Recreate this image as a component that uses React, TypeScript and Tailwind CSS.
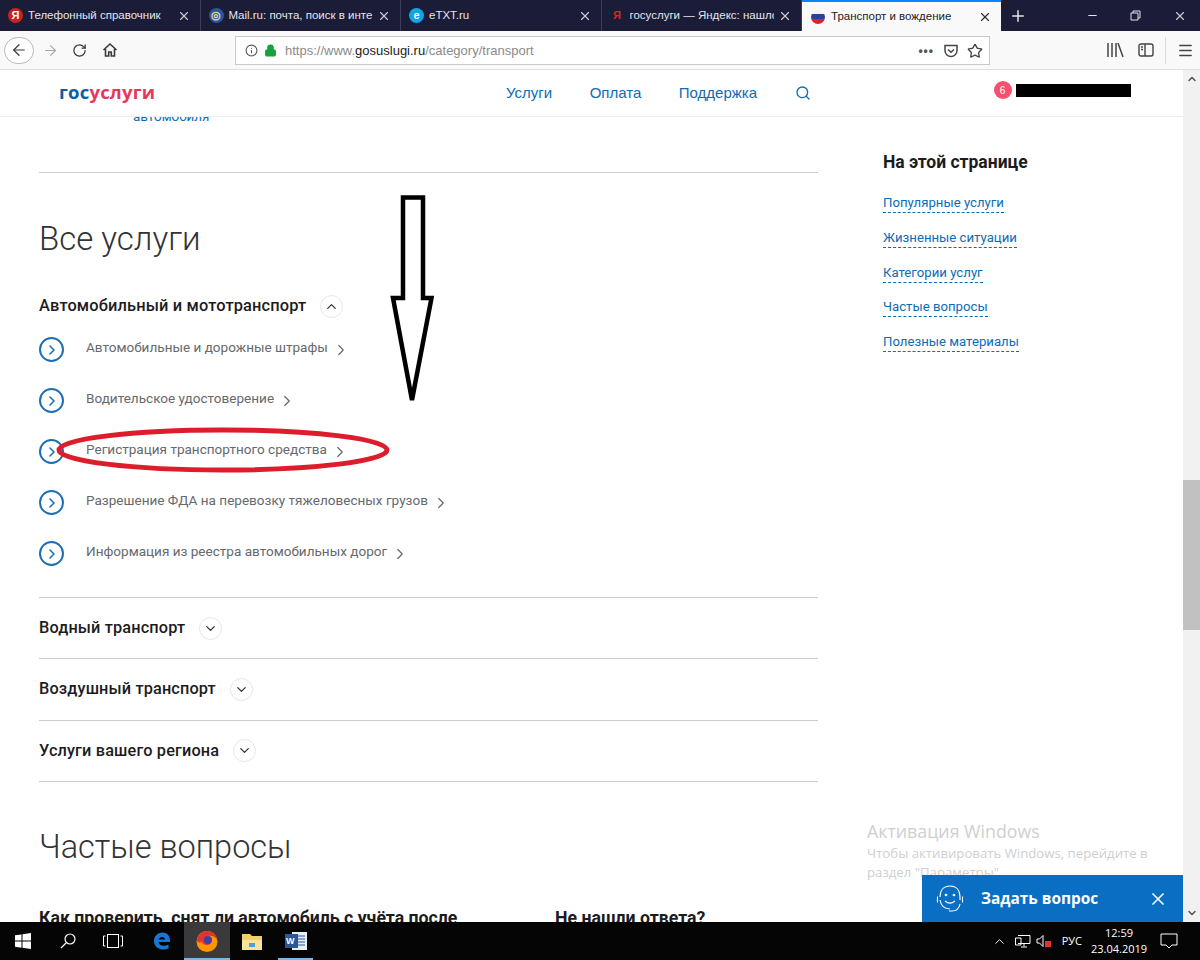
import React from 'react';
import {
  ArrowLeft,
  ArrowRight,
  ChevronDown,
  ChevronRight,
  ChevronUp,
  Info,
  Lock,
  Menu,
  Minus,
  Plus,
  RotateCw,
  Search,
  Star,
  X,
} from 'lucide-react';

const TABS = [
  { title: 'Телефонный справочник', color: 'bg-[#c8231e] text-white', glyph: 'Я' },
  { title: 'Mail.ru: почта, поиск в инте', color: 'bg-[#2a55a5] text-[#e8d9a0]', glyph: '◎' },
  { title: 'eTXT.ru', color: 'bg-[#13a4e8] text-white', glyph: 'e' },
  { title: 'госуслуги — Яндекс: нашло', color: 'bg-transparent text-[#e0231c]', glyph: 'Я' },
];

const SERVICES = [
  'Автомобильные и дорожные штрафы',
  'Водительское удостоверение',
  'Регистрация транспортного средства',
  'Разрешение ФДА на перевозку тяжеловесных грузов',
  'Информация из реестра автомобильных дорог',
];

const OTHER = ['Водный транспорт', 'Воздушный транспорт', 'Услуги вашего региона'];

const ANCHORS = ['Популярные услуги', 'Жизненные ситуации', 'Категории услуг', 'Частые вопросы', 'Полезные материалы'];

const TabBar = () => (
  <div className="flex h-[31px] bg-[#1a1c38] text-[11.5px] text-[#e4e4ea]">
    {TABS.map((tab) => (
      <div key={tab.title} className="flex w-[200.5px] items-center border-r border-[#3a3d5c] pl-2 pr-[9px]">
        <span className={`mr-[5px] flex h-[15px] w-[15px] shrink-0 items-center justify-center rounded-full text-[11px] font-bold leading-none ${tab.color}`}>
          {tab.glyph}
        </span>
        <span className="flex-1 overflow-hidden whitespace-nowrap">{tab.title}</span>
        <X size={14} className="ml-1 shrink-0 text-[#c9cad4]" />
      </div>
    ))}
    <div className="flex w-[199px] items-center border-t-2 border-[#0a84ff] bg-[#f9f9fa] pl-2 pr-[9px] text-[#222]">
      <svg width="16" height="16" viewBox="0 0 16 16" className="mr-[5px] shrink-0">
        <clipPath id="flag">
          <circle cx="8" cy="8" r="7" />
        </clipPath>
        <g clipPath="url(#flag)">
          <rect width="16" height="6" y="0" fill="#f2f2f2" />
          <rect width="16" height="5" y="5" fill="#2a3f9e" />
          <rect width="16" height="6" y="10" fill="#d8242c" />
        </g>
      </svg>
      <span className="flex-1 whitespace-nowrap">Транспорт и вождение</span>
      <X size={14} className="text-[#333]" />
    </div>
    <div className="flex flex-1 items-center text-[#e4e4ea]">
      <Plus size={18} className="ml-[8px]" />
      <Minus size={13} className="ml-[59px]" />
      <svg width="11" height="11" viewBox="0 0 11 11" fill="none" stroke="currentColor" className="ml-[31px]">
        <path d="M1 3h7v7H1zM3 3V1h7v7H8" />
      </svg>
      <X size={14} className="ml-[32px] text-[#c9cad4]" />
    </div>
  </div>
);

const Toolbar = () => (
  <div className="flex h-[39px] items-center border-b border-[#e0e0e2] bg-[#f9f9fa] text-[#3a3a3c]">
    <div className="ml-[4px] flex h-[27px] w-[30px] items-center justify-center rounded-full border border-[#b8b8ba] bg-white">
      <ArrowLeft size={18} strokeWidth={1.6} />
    </div>
    <ArrowRight size={17} strokeWidth={1.6} className="ml-[8px] text-[#a8a8aa]" />
    <RotateCw size={15} strokeWidth={2} className="ml-[13px]" />
    <svg width="16" height="16" viewBox="0 0 16 16" fill="none" stroke="currentColor" strokeWidth="1.6" className="ml-[15px]">
      <path d="M1.5 8 8 2l6.5 6M3.5 7v7h3.2v-4h2.6v4h3.2V7" />
    </svg>
    <div className="ml-[117px] mt-[1px] flex h-[29px] w-[755px] items-center border border-[#c9c9cb] bg-white pl-[9px] pr-[6px] text-[13px]">
      <Info size={13} className="text-[#555]" />
      <Lock size={13} fill="#12a33a" className="ml-[6px] text-[#12a33a]" />
      <span className="ml-[8px] flex-1 text-[#8a8a8c]">
        https://www.<span className="text-[#222]">gosuslugi.ru</span>/category/transport
      </span>
      <span className="mr-[9px] text-[12px] font-bold tracking-[1px] text-[#555]">•••</span>
      <svg width="16" height="16" viewBox="0 0 16 16" fill="none" stroke="#444" strokeWidth="1.5">
        <path d="M2 2.5h12v5a6 6 0 0 1-12 0zM5 6.5l3 2.8 3-2.8" />
      </svg>
      <Star size={16} className="ml-[8px] text-[#444]" />
    </div>
    <svg width="18" height="16" viewBox="0 0 18 16" fill="none" stroke="#444" strokeWidth="1.5" className="ml-[116px]">
      <path d="M2 1v14M6 1v14M10 1v14M12 1l5 14" />
    </svg>
    <svg width="16" height="14" viewBox="0 0 16 14" fill="none" stroke="#444" strokeWidth="1.4" className="ml-[14px]">
      <rect x="1" y="1" width="14" height="12" rx="2" />
      <path d="M7 1v12M3 4h2M3 6.5h2" />
    </svg>
    <div className="ml-[11px] h-[27px] border-l border-[#dcdcde]" />
    <Menu size={17} className="ml-[11px] text-[#444]" />
  </div>
);

const SiteHeader = () => (
  <div className="flex h-[47px] items-center border-b border-[#eceff2] bg-white">
    <div className="ml-[59px] -mt-[2px] w-[447px] font-['Open_Sans',sans-serif] text-[18.5px] font-bold leading-none tracking-[0.2px]">
      <span className="text-[#0d5c9e]">гос</span>
      <span className="text-[#e8375a]">услуги</span>
    </div>
    <nav className="flex items-center gap-[37.500px] font-['Liberation_Sans',sans-serif] text-[15px] text-[#0d6cb5]">
      <span>Услуги</span>
      <span>Оплата</span>
      <span>Поддержка</span>
      <Search size={16} strokeWidth={2} />
    </nav>
    <span className="ml-[183px] -mt-[6px] flex h-[18px] w-[18px] items-center justify-center rounded-full bg-[#f5516f] text-[10px] text-white">
      6
    </span>
    <div className="ml-[4px] -mt-[6px] h-[13px] w-[115px] bg-black" />
  </div>
);

const ServiceRow = ({ label }: { label: string }) => (
  <div className="flex h-[51px] items-center">
    <span className="flex h-[25px] w-[25px] items-center justify-center rounded-full border-2 border-[#1d6fb5] text-[#1d6fb5]">
      <ChevronRight size={16} strokeWidth={2.4} />
    </span>
    <span className="ml-[22px] mb-[4px] text-[13.550px] text-[#66696d]">{label}</span>
    <ChevronRight size={18} strokeWidth={1.6} className="ml-[4px] text-[#66696d]" />
  </div>
);

const RoundToggle = ({ open }: { open?: boolean }) => (
  <span className="ml-[14px] flex h-[23px] w-[23px] items-center justify-center rounded-full border border-[#e4e6e8] text-[#333]">
    {open ? <ChevronUp size={15} /> : <ChevronDown size={15} />}
  </span>
);

const MainColumn = () => (
  <div className="w-[779px]">
    <div className="ml-[94px] -mt-[9px] h-[18px] text-[13.400px] leading-[18px] text-[#0d6cb5]">автомобиля</div>
    <div className="mt-[46px] border-t border-[#c9cdd1]" />
    <h2 className="mt-[42px] text-[33px] font-light leading-[48px] text-[#333]">Все услуги</h2>
    <div className="mt-[29px] flex h-[28px] items-center">
      <span className="text-[16.4px] font-medium tracking-[0.15px] text-[#1c1c1e]">Автомобильный и мототранспорт</span>
      <RoundToggle open />
    </div>
    <div className="mt-[4px] pb-[18px]">
      {SERVICES.map((label) => (
        <ServiceRow key={label} label={label} />
      ))}
    </div>
    {OTHER.map((label) => (
      <div key={label} className="flex h-[61.300px] items-center border-t border-[#c9cdd1]">
        <span className="text-[16.3px] font-medium tracking-[0.15px] text-[#1c1c1e]">{label}</span>
        <RoundToggle />
      </div>
    ))}
    <div className="border-t border-[#c9cdd1]" />
    <h2 className="mt-[41px] text-[32.500px] font-light leading-[48px] text-[#333]">Частые вопросы</h2>
    <div className="mt-[34px] flex">
      <div className="w-[516px] whitespace-nowrap text-[17.700px] font-bold text-[#1c1c1e]">
        Как проверить, снят ли автомобиль с учёта после
      </div>
      <div className="whitespace-nowrap text-[17.700px] font-bold text-[#1c1c1e]">Не нашли ответа?</div>
    </div>
  </div>
);

const Sidebar = () => (
  <div className="ml-[65px] w-[220px] pt-[35px]">
    <div className="whitespace-nowrap text-[17.500px] font-bold leading-[20px] text-[#1c1c1e]">На этой странице</div>
    <div className="mt-[22px] flex flex-col items-start gap-[15.8px]">
      {ANCHORS.map((label) => (
        <span key={label} className="border-b border-dashed border-[#0d6cb5] text-[13.200px] leading-[18px] text-[#0d6cb5]">
          {label}
        </span>
      ))}
    </div>
  </div>
);

const Scrollbar = () => (
  <div className="flex h-full w-[17px] flex-col items-center bg-[#f1f1f1] text-[#555]">
    <ChevronUp size={12} strokeWidth={3} className="mt-[3px]" />
    <div className="mt-[395px] h-[150px] w-full bg-[#c1c1c1]" />
    <div className="flex-1" />
    <ChevronDown size={12} strokeWidth={3} className="mb-[3px]" />
  </div>
);

// hand drawn marks on top of the screenshot
const Annotations = () => (
  <>
    <svg width="60" height="230" viewBox="0 0 60 230" fill="none" stroke="#000" strokeWidth="4.500" className="absolute left-[382px] top-[118px]">
      <path d="M21 9.500h20V110h8.500L30 212 11 110h10z" strokeLinejoin="miter" />
    </svg>
    <svg width="340" height="50" viewBox="0 0 340 50" fill="none" className="absolute left-[54px] top-[355px]">
      <ellipse cx="169" cy="25" rx="164" ry="20" stroke="#dd1d2b" strokeWidth="5" />
    </svg>
  </>
);

const ActivationNotice = () => (
  <div className="absolute left-[867px] top-[748px] font-['Open_Sans',sans-serif] text-[#cfcfcf]">
    <div className="text-[17.800px] leading-[26px]">Активация Windows</div>
    <div className="mt-0 w-[300px] text-[13.200px] leading-[19px]">
      Чтобы активировать Windows, перейдите в раздел "Параметры"
    </div>
  </div>
);

const HelpWidget = () => (
  <div className="absolute left-[922px] bottom-0 flex h-[47px] w-[261px] items-center bg-[#0a6fc2] text-white">
    <svg width="30" height="32" viewBox="0 0 30 32" fill="none" stroke="currentColor" strokeWidth="1.100" className="ml-[13px]">
      <path d="M5 14C5 7 9 3 15 3s10 4 10 11v3M5 17c1 6 5 9 10 9" />
      <path d="M2.500 13.500v6M27.500 13.500v6M25 21c-1 5-4 7-8 7h-3" />
      <circle cx="11" cy="12" r="0.8" fill="currentColor" />
      <circle cx="19" cy="12" r="0.8" fill="currentColor" />
      <path d="M10 18c3 2.500 7 2.500 10 0" />
    </svg>
    <span className="ml-[16px] flex-1 font-['Open_Sans',sans-serif] text-[15.400px] font-bold">Задать вопрос</span>
    <X size={20} strokeWidth={2} className="mr-[15px]" />
  </div>
);

const Taskbar = () => (
  <div className="flex h-[38px] items-center bg-[#050506] text-white">
    <svg width="16" height="16" viewBox="0 0 16 16" fill="currentColor" className="ml-[15px]">
      <path d="M0 2.300 6.500 1.400v6.200H0zM7.500 1.200 16 0v7.600H7.500zM0 8.500h6.500v6.200L0 13.800zM7.500 8.500H16V16l-8.500-1.200z" />
    </svg>
    <svg width="16" height="16" viewBox="0 0 16 16" fill="none" stroke="currentColor" strokeWidth="1.200" className="ml-[29px]">
      <circle cx="10" cy="6" r="5" />
      <path d="M6.500 9.500 1 15" />
    </svg>
    <svg width="20" height="14" viewBox="0 0 20 14" fill="none" stroke="currentColor" className="ml-[27px]">
      <rect x="4.500" y="0.500" width="11" height="13" />
      <path d="M2.500 2H.5v10h2M17.500 2h2v10h-2" />
    </svg>
    <svg width="20" height="20" viewBox="0 0 20 20" fill="none" className="ml-[29px]">
      <path d="M2 10C2 5 6 1.500 10.500 1.500 15.500 1.500 18.500 5.500 18 11H6.500c.5 4 6 5 10 2.500v4C11 20 2 18 2 10zm4.500-1.500H13C13 5 7.500 5 6.500 8.500z" fill="#1976d2" />
    </svg>
    <div className="relative ml-[12px] flex h-full w-[46px] items-center justify-center bg-[#3a3a3c]">
      <svg width="24" height="24" viewBox="0 0 24 24">
        <circle cx="12" cy="12.500" r="10.500" fill="#ff9500" />
        <path d="M2 12C2 6 7 2 12 2c5 0 9 3 10 8-3-3-6-4-9-3-4 1-2 5 1 5 3 0 2 4-2 4-3 0-5-2-6-4 0 2-2 2-4 0z" fill="#e0352b" />
        <circle cx="13" cy="11" r="4" fill="#3b3fa8" />
      </svg>
      <div className="absolute inset-x-0 bottom-0 h-[2px] bg-[#76b9ed]" />
    </div>
    <svg width="22" height="20" viewBox="0 0 22 20" className="ml-[11px]">
      <path d="M1 3h8l2 2h10v14H1z" fill="#f3cf6b" />
      <path d="M1 9h20v10H1z" fill="#fbe39a" />
      <path d="M8 12h6v4H8z" fill="#4aa3df" />
    </svg>
    <div className="relative ml-[15px] flex h-full w-[35px] items-center justify-center">
      <svg width="22" height="20" viewBox="0 0 22 20">
        <rect x="7" y="1" width="15" height="18" fill="#e8eef8" />
        <path d="M11 5h9M11 8h9M11 11h9M11 14h9" stroke="#2b579a" />
        <rect x="0" y="3" width="13" height="14" fill="#2b579a" />
      </svg>
      <span className="absolute left-[8px] top-[12px] text-[9px] font-bold leading-[14px]">W</span>
      <div className="absolute inset-x-0 bottom-0 h-[2px] bg-[#76b9ed]" />
    </div>
    <div className="flex-1" />
    <ChevronUp size={15} strokeWidth={1.500} />
    <svg width="16" height="15" viewBox="0 0 16 15" fill="none" stroke="currentColor" className="ml-[8px]">
      <path d="M3 1.500h12v8H3M.5 4H6v7H.5zM9 9.500v3M6 13h6" />
    </svg>
    <svg width="16" height="14" viewBox="0 0 16 14" fill="none" stroke="currentColor" className="ml-[5px]">
      <path d="M1 5h2.500L7 1.500v11L3.500 9H1z" />
      <rect x="9" y="7" width="6" height="6" fill="#e0352b" stroke="none" />
    </svg>
    <span className="ml-[10px] font-['Open_Sans',sans-serif] text-[11px]">РУС</span>
    <div className="ml-[9px] w-[56px] text-center font-['Open_Sans',sans-serif] text-[11px] leading-[16px]">
      <div>12:59</div>
      <div>23.04.2019</div>
    </div>
    <svg width="18" height="16" viewBox="0 0 18 16" fill="none" stroke="currentColor" className="ml-[13px] mr-[22px]">
      <path d="M1 1h16v11h-5l-3 3-3-3H1z" />
    </svg>
  </div>
);

export default function App() {
  return (
    <div className="relative flex h-[960px] w-[1200px] flex-col overflow-hidden bg-white font-['Liberation_Sans',sans-serif]">
      <TabBar />
      <Toolbar />
      <div className="flex min-h-0 flex-1">
        <div className="min-w-0 flex-1">
          <SiteHeader />
          <div className="flex h-[805px] overflow-hidden pl-[39px] font-['Roboto',sans-serif]">
            <MainColumn />
            <Sidebar />
          </div>
        </div>
        <Scrollbar />
      </div>
      <Taskbar />
      <div className="pointer-events-none absolute inset-x-0 top-[70px] h-[852px]">
        <Annotations />
        <ActivationNotice />
        <HelpWidget />
      </div>
    </div>
  );
}
